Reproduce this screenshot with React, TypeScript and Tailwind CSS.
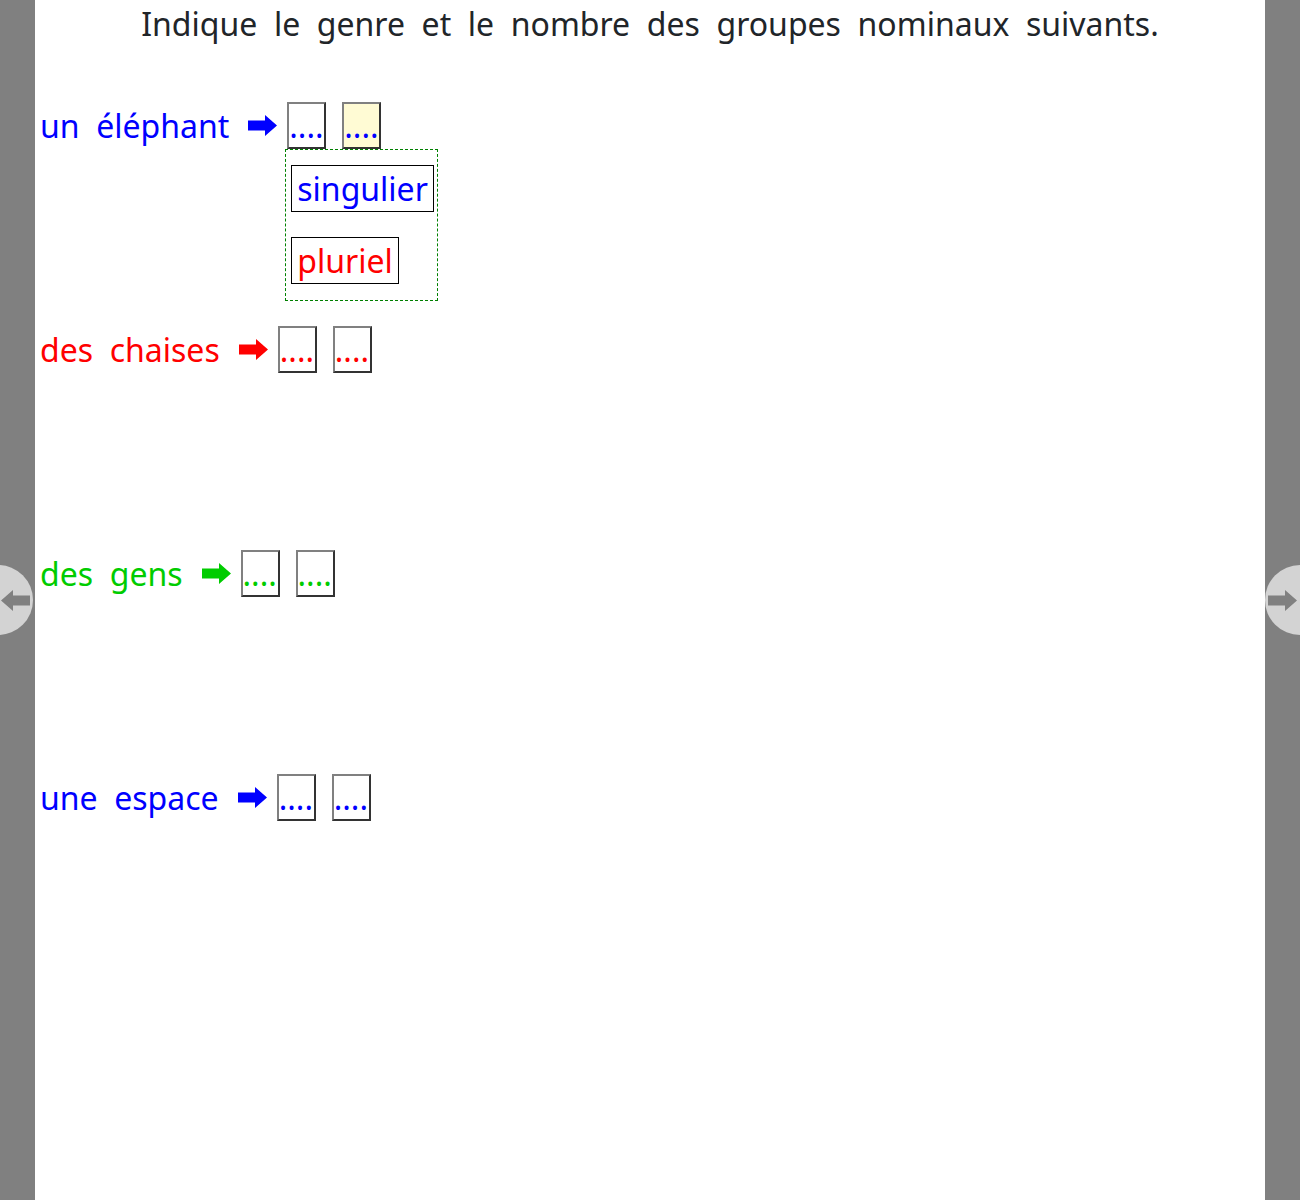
import React from "react";

const FONT = { fontFamily: '"Noto Sans", "Open Sans", sans-serif' };

function Arrow({ color, className = "" }: { color: string; className?: string }) {
  return (
    <svg width="29" height="21" viewBox="0 0 29 21" className={className}>
      <polygon points="0,5.5 17,5.5 17,0 29,10.5 17,21 17,15.5 0,15.5" fill={color} />
    </svg>
  );
}

function Box({ color, bg = "bg-white", className = "" }: { color: string; bg?: string; className?: string }) {
  return (
    <span
      className={`inline-block w-[39px] border-2 border-t-[#808080] border-l-[#808080] border-r-[#333333] border-b-[#333333] leading-[normal] whitespace-nowrap align-baseline ${bg} ${className}`}
      style={{ color }}
    >
      ....
    </span>
  );
}

function Row({
  label,
  color,
  yellowSecond = false,
  popup = false,
}: {
  label: string;
  color: string;
  yellowSecond?: boolean;
  popup?: boolean;
}) {
  return (
    <div className="h-[224px] pl-[5px] whitespace-nowrap text-[32px] leading-[normal]" style={FONT}>
      <span style={{ color }}>{label}</span>
      <span className="inline-block w-[19px]" />
      <Arrow color={color} className="inline-block align-[2px]" />
      <span className="inline-block w-[10px]" />
      <span className="relative inline-block align-baseline">
        <Box color={color} />
        {popup && (
          <div className="absolute left-[-2px] top-[47px] w-[153px] h-[152px] border border-dashed border-[#008000] bg-white pl-[5px] pt-[15px] flex flex-col items-start gap-[25px] z-10">
            <span className="border border-black px-[5px] py-[1px] leading-[normal] text-[#0000ff]">singulier</span>
            <span className="border border-black px-[5px] py-[1px] leading-[normal] text-[#ff0000]">pluriel</span>
          </div>
        )}
      </span>
      <span className="inline-block w-[16px]" />
      <Box color={color} bg={yellowSecond ? "bg-[#fffbd4]" : "bg-white"} />
    </div>
  );
}

export default function App() {
  return (
    <div className="relative flex h-[1200px] w-[1300px] overflow-hidden bg-[#808080]">
      <div className="w-[35px] shrink-0 bg-[#808080]" />
      <div className="flex-1 bg-white flex flex-col">
        <div
          className="pt-[2px] h-[102px] text-center text-[32px] leading-[normal] text-[#212529] whitespace-pre"
          style={FONT}
        >
          {"Indique\u00a0 le\u00a0 genre\u00a0 et\u00a0 le\u00a0 nombre\u00a0 des\u00a0 groupes\u00a0 nominaux\u00a0 suivants."}
        </div>
        <Row label={"un\u00a0 éléphant"} color="#0000ff" yellowSecond popup />
        <Row label={"des\u00a0 chaises"} color="#ff0000" />
        <Row label={"des\u00a0 gens"} color="#00cc00" />
        <Row label={"une\u00a0 espace"} color="#0000ff" />
      </div>
      <div className="w-[35px] shrink-0 bg-[#808080]" />

      <div className="absolute left-[-37px] top-[565px] w-[70px] h-[70px] rounded-full bg-[#d3d3d3] flex items-center justify-end pr-[3px]">
        <Arrow color="#808080" className="rotate-180" />
      </div>
      <div className="absolute left-[1265px] top-[565px] w-[70px] h-[70px] rounded-full bg-[#d3d3d3] flex items-center justify-start pl-[3px]">
        <Arrow color="#808080" />
      </div>
    </div>
  );
}
